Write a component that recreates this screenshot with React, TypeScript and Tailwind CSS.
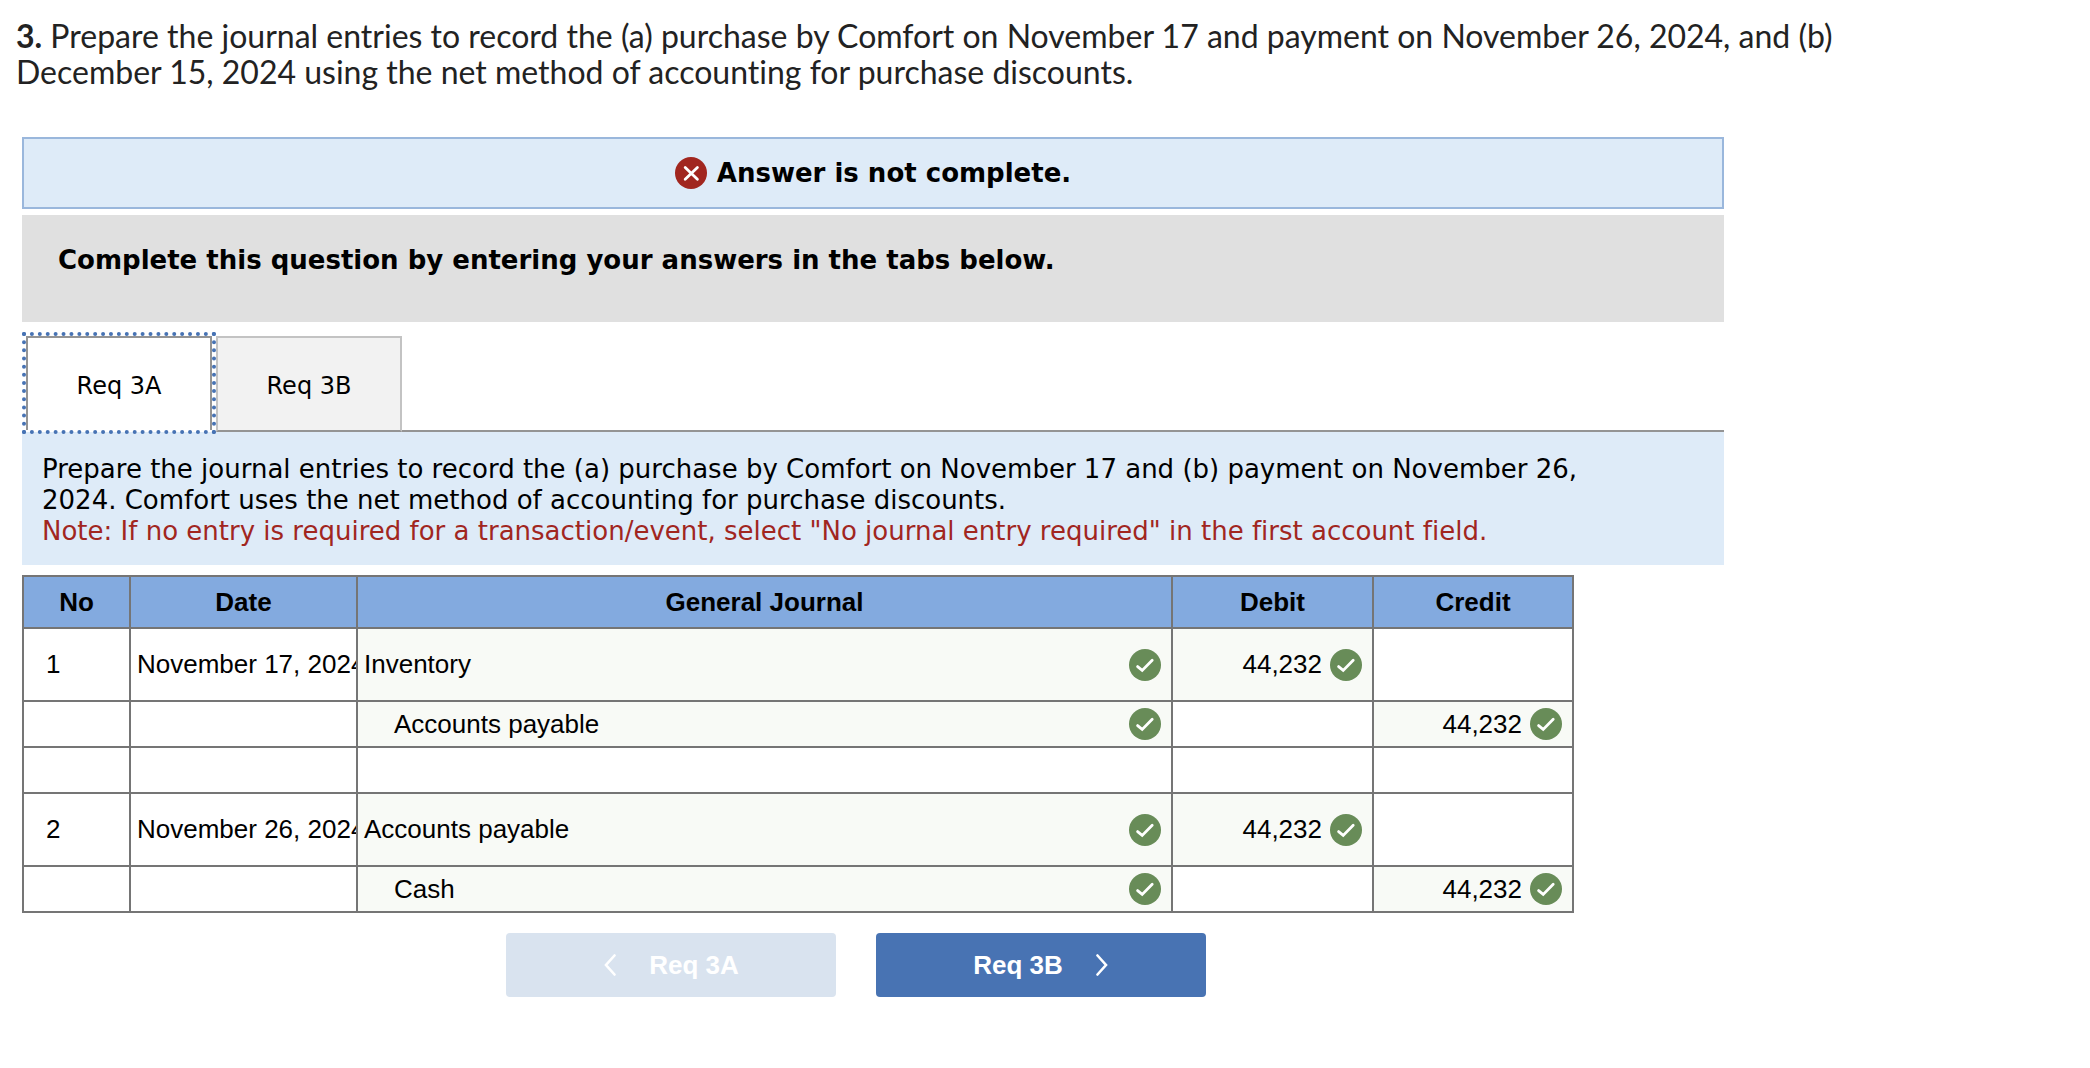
import { useState } from "react";

type Row = {
  no?: string;
  date?: string;
  account?: string;
  indent?: boolean;
  debit?: string;
  credit?: string;
  tall?: boolean;
};

const rows: Row[] = [
  { no: "1", date: "November 17, 2024", account: "Inventory", debit: "44,232", tall: true },
  { account: "Accounts payable", indent: true, credit: "44,232" },
  {},
  { no: "2", date: "November 26, 2024", account: "Accounts payable", debit: "44,232", tall: true },
  { account: "Cash", indent: true, credit: "44,232" },
];

function Check() {
  return (
    <svg viewBox="0 0 32 32" className="size-8 shrink-0" role="img" aria-label="Correct">
      <circle cx="16" cy="16" r="16" fill="#688c58" />
      <path d="M8.6 17.6 L13.2 21.4 L23.2 11.2" fill="none" stroke="#fff" strokeWidth="2.8" strokeLinecap="round" strokeLinejoin="miter" />
    </svg>
  );
}

function Cross() {
  return (
    <svg viewBox="0 0 32 32" className="size-8 shrink-0" role="img" aria-label="Incomplete">
      <circle cx="16" cy="16" r="16" fill="#a1261f" />
      <path d="M10.2 10.4 L22.4 22.2 M22.4 10.4 L10.2 22.2" fill="none" stroke="#fff" strokeWidth="2.8" strokeLinecap="round" />
    </svg>
  );
}

function Amount({ value }: { value?: string }) {
  return (
    <td className={value ? "border-2 border-[#757575] bg-[#f8faf6] p-0" : "border-2 border-[#757575] p-0"}>
      {value && (
        <div className="flex items-center justify-end gap-2 pr-2.5">
          <span>{value}</span>
          <Check />
        </div>
      )}
    </td>
  );
}

export default function App() {
  const [tab, setTab] = useState("3A");
  const active =
    "relative z-10 mx-1 mt-1 mb-0.5 h-[94px] w-[186px] border-x-2 border-t-2 border-[#949494] bg-white pt-1 outline-4 outline-dotted outline-[#4773b4]";
  const idle =
    "mt-1 h-24 w-[186px] border-2 border-[#c3c3c3] border-b-[#949494] bg-[#f2f2f2] pt-1 outline-none";

  return (
    <main className="min-h-screen bg-white pb-8 font-['DejaVu_Sans',Verdana,sans-serif] text-[26px] leading-[31px] text-black [font-variant-ligatures:none]">
      <p className="px-4 pt-[18px] font-['Lato',sans-serif] text-[32px] leading-9 text-[#222]">
        <strong>3.</strong> Prepare the journal entries to record the (a) purchase by Comfort on November 17 and
        payment on November 26, 2024, and (b)
        <br />
        December 15, 2024 using the net method of accounting for purchase discounts.
      </p>

      <div className="mx-[22px] mt-[47px] max-w-[1702px]">
        <div role="status" className="flex h-[72px] items-center justify-center gap-2.5 border-2 border-[#9ab7dc] bg-[#deebf8]">
          <Cross />
          <strong>Answer is not complete.</strong>
        </div>

        <div className="mt-1.5 h-[107px] bg-[#e0e0e0] px-9 pt-[30px]">
          <h2 className="font-bold">Complete this question by entering your answers in the tabs below.</h2>
        </div>

        <div role="tablist" className="mt-2.5 flex text-2xl">
          <button type="button" role="tab" aria-selected={tab === "3A"} onClick={() => setTab("3A")} className={tab === "3A" ? active : idle}>
            Req 3A
          </button>
          <button type="button" role="tab" aria-selected={tab === "3B"} onClick={() => setTab("3B")} className={tab === "3B" ? active : idle}>
            Req 3B
          </button>
          <div className="flex-1 border-b-2 border-[#949494]" />
        </div>

        <div className="bg-[#deebf8] px-5 pt-[22px] pb-[18px]">
          <p>
            Prepare the journal entries to record the (a) purchase by Comfort on November 17 and (b) payment on
            November 26,
            <br />
            2024. Comfort uses the net method of accounting for purchase discounts.
          </p>
          <p className="text-[#a1261f]">
            Note: If no entry is required for a transaction/event, select "No journal entry required" in the first
            account field.
          </p>
        </div>

        <div className="mt-2.5 max-w-[1552px] font-['Liberation_Sans',Arial,sans-serif]">
          <table className="w-full table-fixed border-collapse">
            <colgroup>
              <col className="w-[107px]" />
              <col className="w-[227px]" />
              <col />
              <col className="w-[201px]" />
              <col className="w-[200px]" />
            </colgroup>
            <thead>
              <tr className="h-[52px] bg-[#83aadf]">
                {["No", "Date", "General Journal", "Debit", "Credit"].map((h) => (
                  <th key={h} scope="col" className="border-2 border-[#757575] p-0 font-bold">
                    {h}
                  </th>
                ))}
              </tr>
            </thead>
            <tbody>
              {rows.map((r, i) => (
                <tr key={i} className={r.tall ? "h-[73px]" : "h-[46px]"}>
                  <td className="border-2 border-[#757575] py-0 pr-0 pl-[22px]">{r.no}</td>
                  <td className="overflow-hidden border-2 border-[#757575] py-0 pr-0 pl-1.5 whitespace-nowrap">{r.date}</td>
                  <td className={r.account ? "border-2 border-[#757575] bg-[#f8faf6] p-0" : "border-2 border-[#757575] p-0"}>
                    {r.account && (
                      <div className={r.indent ? "flex items-center justify-between pr-2.5 pl-9" : "flex items-center justify-between pr-2.5 pl-1.5"}>
                        <span>{r.account}</span>
                        <Check />
                      </div>
                    )}
                  </td>
                  <Amount value={r.debit} />
                  <Amount value={r.credit} />
                </tr>
              ))}
            </tbody>
          </table>
        </div>

        <div className="mt-5 flex justify-center gap-10 pr-[34px] font-['Liberation_Sans',Arial,sans-serif] font-bold text-white">
          <button type="button" disabled className="flex h-16 w-[330px] items-center justify-center gap-8 rounded bg-[#d9e3ef]">
            <svg viewBox="0 0 14 22" className="h-[22px] w-3.5" aria-hidden="true">
              <path d="M11.5 1.5 L3 11 L11.5 20.5" fill="none" stroke="currentColor" strokeWidth="2.6" strokeLinecap="round" />
            </svg>
            Req 3A
          </button>
          <button type="button" onClick={() => setTab("3B")} className="flex h-16 w-[330px] items-center justify-center gap-8 rounded bg-[#4873b3]">
            Req 3B
            <svg viewBox="0 0 14 22" className="h-[22px] w-3.5" aria-hidden="true">
              <path d="M2.5 1.5 L11 11 L2.5 20.5" fill="none" stroke="currentColor" strokeWidth="2.6" strokeLinecap="round" />
            </svg>
          </button>
        </div>
      </div>
    </main>
  );
}
